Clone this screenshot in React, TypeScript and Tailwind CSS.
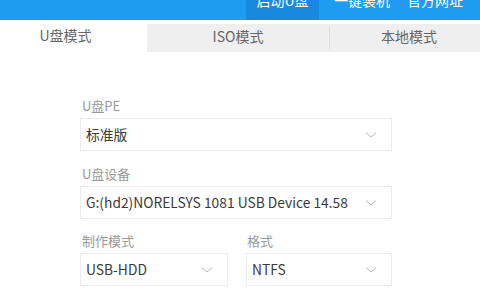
import React from "react";

const font = { fontFamily: '"Noto Sans CJK SC", "Noto Sans", sans-serif' };

function Chevron() {
  return (
    <svg width="12" height="8" viewBox="0 0 12 8" className="shrink-0">
      <path d="M1 1.5 L6 6 L11 1.5" fill="none" stroke="#b8b8b8" strokeWidth="1" />
    </svg>
  );
}

function Select({ value, className }: { value: string; className: string }) {
  return (
    <div className={`flex h-[33px] items-center justify-between border border-[#ececec] bg-white pl-[5px] pr-[14px] ${className}`}>
      <span className="text-[13.8px] text-[#3a3a3a]">{value}</span>
      <Chevron />
    </div>
  );
}

export default function App() {
  return (
    <div className="h-[300px] w-[480px] overflow-hidden bg-white" style={font}>
      <div className="-mt-[20px] flex h-[40px] justify-end bg-[#1d9cf2] pr-[15px] text-[14px] text-white">
        <div className="flex w-[73px] items-center justify-center bg-[#1889de]">启动U盘</div>
        <div className="flex w-[86px] items-center justify-center">一键装机</div>
        <div className="flex w-[60px] items-center justify-center">官方网址</div>
      </div>
      <div className="flex h-[32px] text-[14px] text-[#666]">
        <div className="flex w-[147px] items-center justify-center bg-white pb-[2px] pr-[16px]">U盘模式</div>
        <div className="mt-[4px] flex flex-1 items-center bg-[#efefef]">
          <div className="flex flex-1 items-center justify-center pb-[3px]">ISO模式</div>
          <div className="h-[22px] w-px bg-[#dcdcdc]" />
          <div className="flex w-[150px] items-center justify-center pb-[3px] pl-[8px]">本地模式</div>
        </div>
      </div>
      <div className="flex flex-col pl-[80px] pt-[45px]">
        <div className="mb-[3px] pl-[2px] text-[13px] leading-[18px] text-[#9a9a9a]">U盘PE</div>
        <Select value="标准版" className="w-[312px]" />
        <div className="mb-[3px] mt-[14px] pl-[2px] text-[13px] leading-[18px] text-[#9a9a9a]">U盘设备</div>
        <Select value="G:(hd2)NORELSYS 1081 USB Device 14.58" className="w-[312px]" />
        <div className="mt-[13px] flex gap-[18px]">
          <div className="flex flex-col">
            <div className="mb-[3px] pl-[2px] text-[13px] leading-[18px] text-[#9a9a9a]">制作模式</div>
            <Select value="USB-HDD" className="w-[148px]" />
          </div>
          <div className="flex flex-col">
            <div className="mb-[3px] pl-[1px] text-[13px] leading-[18px] text-[#9a9a9a]">格式</div>
            <Select value="NTFS" className="w-[146px]" />
          </div>
        </div>
      </div>
    </div>
  );
}
